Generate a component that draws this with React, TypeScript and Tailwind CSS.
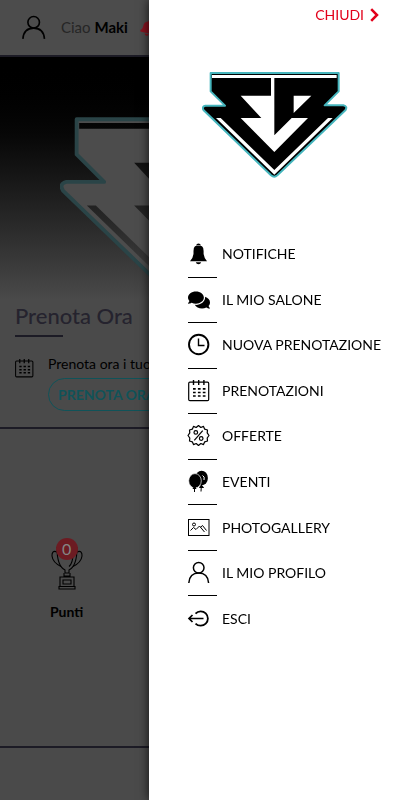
import React from "react";
import { FaBell, FaComments } from "react-icons/fa";

type IconProps = { className?: string };

function Line({ className = "", children }: { className?: string; children: React.ReactNode }) {
  return (
    <svg viewBox="0 0 22 22" fill="none" stroke="currentColor" strokeWidth="1.2" className={`overflow-visible ${className}`} aria-hidden="true">
      {children}
    </svg>
  );
}

function BellIcon({ className = "" }: IconProps) {
  return (
    <svg viewBox="0 0 22 22" fill="currentColor" className={className} aria-hidden="true">
      <path d="M8 2.4Q8.6.6 10.500.6T13 2.400Q10.500 1.500 8 2.400Z" />
      <path d="M7 3.200Q10.500 1.900 14 3.200Q15.600 4.500 15.600 8V11Q16 14.500 19 18.200H2Q5.200 14.500 5.500 11V8Q5.500 4.500 7 3.200Z" />
      <path d="M7.800 19.300H13.200Q12.600 21.300 10.500 21.300T7.800 19.300Z" />
    </svg>
  );
}

function ClockIcon({ className }: IconProps) {
  return (
    <Line className={className}>
      <circle cx="10.700" cy="10.500" r="9.700" strokeWidth="1.900" />
      <path d="M10.500 4.500V11.500H16.500" strokeWidth="1.400" />
    </Line>
  );
}

function CalendarIcon({ className }: IconProps) {
  return (
    <Line className={className}>
      <rect x=".7" y="2.200" width="20" height="18.500" rx="1.200" />
      <path d="M5.500 0V5M10.700 0V5M15.900 0V5" strokeWidth="1.400" />
      <path d="M5 8.800H17.500M5 12.500H17.500M5 16H17.500" strokeWidth="1.700" strokeDasharray="2.700 2.200" />
    </Line>
  );
}

function OfferIcon({ className }: IconProps) {
  return (
    <Line className={className}>
      <path
        strokeLinejoin="round"
        d="M10.500 0.500L12.800 2.500L15.500 1.400L16.700 4.200L19.500 5L19.200 7.900L21 10.500L19.200 13L19.500 16L16.700 16.800L15.500 19.600L12.800 18.500L10.500 20.500L8.200 18.500L5.500 19.600L4.300 16.800L1.500 16L1.800 13L0 10.500L1.800 7.900L1.500 5L4.300 4.200L5.500 1.400L8.200 2.500Z"
      />
      <circle cx="7.800" cy="7.400" r="1.800" />
      <circle cx="13.200" cy="13.500" r="1.800" />
      <path d="M14.700 5.700L6.300 15.300" />
    </Line>
  );
}

function BalloonsIcon({ className = "" }: IconProps) {
  return (
    <svg viewBox="0 0 22 22" className={`overflow-visible ${className}`} aria-hidden="true">
      <ellipse cx="13.600" cy="7" rx="6.300" ry="7.300" fill="currentColor" />
      <path d="M13.500 12L13 20.500M13.300 14L15.500 16.500H11.500Z" fill="currentColor" stroke="currentColor" />
      <path d="M14.500 4.500Q17 5.500 16 9" stroke="white" fill="none" />
      <ellipse cx="7" cy="9.800" rx="6.300" ry="7.200" fill="currentColor" stroke="white" strokeWidth=".7" />
      <path d="M6.500 16V21M6.500 15.500L8 17.500H5Z" fill="currentColor" stroke="currentColor" />
    </svg>
  );
}

function PhotoIcon({ className }: IconProps) {
  return (
    <Line className={className}>
      <rect x=".5" y="2.500" width="20.500" height="16" strokeWidth="1" />
      <circle cx="6" cy="7.500" r="1.500" strokeWidth="1" />
      <path d="M2.500 13.500L5.500 10.500L8 12.500L11.500 9L16.500 15M12.500 10.300L14.500 8.500L18.500 13.500" strokeWidth="1" />
    </Line>
  );
}

function UserIcon({ className }: IconProps) {
  return (
    <Line className={className}>
      <circle cx="10.700" cy="5.800" r="5.300" strokeWidth="1.500" />
      <path d="M.8 21C1.300 14.500 5 11.100 10.700 11.100S20.100 14.500 20.600 21" strokeWidth="1.500" />
    </Line>
  );
}

function ExitIcon({ className }: IconProps) {
  return (
    <Line className={className}>
      <path d="M7.500 5.500A7.200 7.200 0 1 1 7.500 15.500" strokeWidth="1.800" />
      <path d="M15.500 10.500H1M4.500 7L1 10.500L4.500 14" strokeWidth="1.700" />
    </Line>
  );
}

function TrophyIcon({ className = "" }: IconProps) {
  return (
    <svg viewBox="0 0 32 46" fill="none" stroke="currentColor" strokeWidth="1.100" className={className} aria-hidden="true">
      <path d="M6 4H26C26 16 24 23 18 26V29H14V26C8 23 6 16 6 4Z" />
      <path d="M6 8C2 6 .8 9 1 12C1.500 17 5 20 10 22.500M26 8C30 6 31.200 9 31 12C30.500 17 27 20 22 22.500" />
      <path d="M22 9C22 15 21 20 18 22.500M13 29V32H19V29M9 33H23V42.500H9ZM12 36H20V40H12ZM8 42.500H24V45H8Z" />
    </svg>
  );
}

const logoOutline = "M62 39H446V94L404 136H460Q474 139 466 151L262 346Q253 354 243 346L41 151Q34 140 46 137H105L62 94Z";
const logoCutouts =
  "M66 45H440V54H66ZM243 54H253V226L305 174H354L253 276L152 174H214L152 107H243ZM311 107H364L311 159ZM78 174H92L253 330L414 174H428L253 344Z";

function Logo({ className = "", body, edge }: { className?: string; body: string; edge: string }) {
  return (
    <svg viewBox="36 33 438 324" className={className} role="img" aria-label="EB">
      <path className={body} fillRule="evenodd" d={`${logoOutline}${logoCutouts}`} />
      <path className={edge} fill="none" strokeWidth="6" strokeLinejoin="round" d={logoOutline} />
    </svg>
  );
}

const menu = [
  { label: "NOTIFICHE", Icon: BellIcon },
  { label: "IL MIO SALONE", Icon: FaComments },
  { label: "NUOVA PRENOTAZIONE", Icon: ClockIcon },
  { label: "PRENOTAZIONI", Icon: CalendarIcon },
  { label: "OFFERTE", Icon: OfferIcon },
  { label: "EVENTI", Icon: BalloonsIcon },
  { label: "PHOTOGALLERY", Icon: PhotoIcon },
  { label: "IL MIO PROFILO", Icon: UserIcon },
  { label: "ESCI", Icon: ExitIcon },
];

function Home() {
  return (
    <div className="flex min-h-screen flex-col overflow-hidden bg-[#4a4a4a] text-black">
      <header className="flex h-[57px] items-center border-b-2 border-[#1c1b25] bg-[#4c4c4c] pl-[22px]">
        <UserIcon className="mr-[15px] size-6" />
        <p className="text-[15px] whitespace-nowrap text-[#262626]">
          Ciao <span className="font-bold text-black">Maki</span>
        </p>
        <FaBell className="ml-[12px] size-4 rotate-12 text-[#8a1420]" />
      </header>

      <div className="flex h-[243px] justify-center bg-linear-to-b from-black to-[#4a4a4a] pt-[58px]">
        <Logo className="h-[208px] w-[280px]" body="fill-[#4c4c4c]" edge="stroke-[#2a4447]" />
      </div>

      <section className="border-b-2 border-[#1c1b25] px-[15px] pb-[16px]">
        <h1 className="text-[22px] leading-8 font-medium text-[#25232e]">Prenota Ora</h1>
        <div className="mt-[3px] h-[2px] w-12 bg-[#1c1b25]" />
        <div className="mt-[17px] flex gap-[14px]">
          <CalendarIcon className="mt-[5px] size-[19px]" />
          <div>
            <p className="text-sm leading-5 whitespace-nowrap">Prenota ora i tuoi servizi</p>
            <button className="mt-[4px] h-[33px] rounded-full border border-[#105359] px-[9px] text-sm font-bold text-[#105359]">
              PRENOTA ORA
            </button>
          </div>
        </div>
      </section>

      <section className="grid h-[319px] grid-cols-3 items-center border-b-2 border-[#1c1b25]">
        <div className="flex flex-col items-center gap-[12px] pb-[16px]">
          <div className="relative pt-[6px]">
            <TrophyIcon className="h-[46px] w-8" />
            <span className="absolute top-0 left-[5px] flex size-[22px] items-center justify-center rounded-full bg-[#6c1b22] text-base text-[#858585]">
              0
            </span>
          </div>
          <p className="text-sm leading-5 font-bold">Punti</p>
        </div>
      </section>
    </div>
  );
}

function Drawer() {
  return (
    <aside className="fixed inset-y-0 right-0 w-[251px] bg-white text-black shadow-[0_0_10px_rgba(0,0,0,0.8)]">
      <div className="flex h-[30px] justify-end pr-[21px]">
        <button className="flex items-center gap-[6px] text-sm text-[#e2001a]">
          CHIUDI
          <svg viewBox="0 0 9 14" className="h-[14px] w-[9px]" fill="none" stroke="currentColor" strokeWidth="2.500" aria-hidden="true">
            <path d="M1.200 1.200L7 7L1.200 12.800" />
          </svg>
        </button>
      </div>
      <div className="flex justify-center pt-[41px]">
        <Logo className="h-[108px] w-[146px]" body="fill-black" edge="stroke-[#45b5bd]" />
      </div>
      <nav className="mt-[53px] pl-[39px]">
        <ul className="grid h-[410px] auto-rows-fr">
          {menu.map(({ label, Icon }) => (
            <li key={label} className="group">
              <a href="#" className="flex h-full items-center gap-[5px] text-sm whitespace-nowrap">
                <span className="flex h-full w-[29px] items-center border-b border-black group-last:border-transparent">
                  <Icon className="size-[22px]" />
                </span>
                <span className="pb-px">{label}</span>
              </a>
            </li>
          ))}
        </ul>
      </nav>
    </aside>
  );
}

export default function App() {
  return (
    <main className="font-[Lato,'Open_Sans',sans-serif]">
      <Home />
      <Drawer />
    </main>
  );
}
